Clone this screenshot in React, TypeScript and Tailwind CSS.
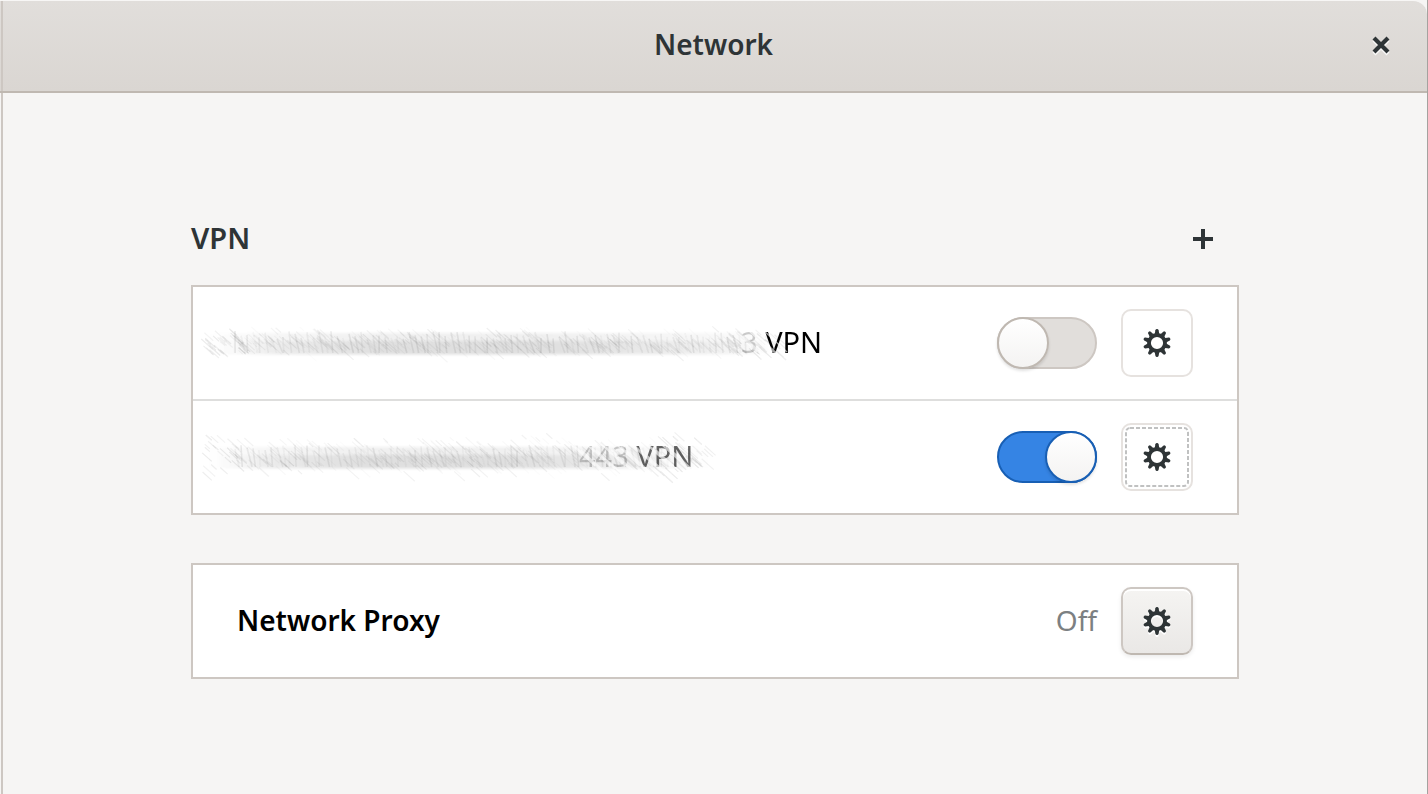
import React, { useState } from "react";

const TEETH = [0, 36, 72, 108, 144, 180, 216, 252, 288, 324];

function GearIcon({ raised = false }: { raised?: boolean }) {
  const shape = (
    <>
      <circle cx="16" cy="16" r="8" fill="none" stroke="currentColor" strokeWidth="3.8" />
      {TEETH.map((angle) => (
        <path
          key={angle}
          d="M13.5 8 L14.4 3.2 Q14.7 2 16 2 Q17.3 2 17.6 3.2 L18.5 8 Z"
          fill="currentColor"
          transform={`rotate(${angle} 16 16)`}
        />
      ))}
    </>
  );
  return (
    <svg viewBox="0 0 32 32" className="size-8" aria-hidden="true">
      {raised && (
        <g className="text-white" transform="translate(0 2)">
          {shape}
        </g>
      )}
      {shape}
    </svg>
  );
}

type GearButtonProps = { label: string; variant?: "flat" | "raised"; focused?: boolean };

function GearButton({ label, variant = "flat", focused = false }: GearButtonProps) {
  const look =
    variant === "raised"
      ? "border-[#cdc7c2] border-b-[#bfb8b1] bg-linear-to-b from-[#f5f4f2] to-[#eae8e6] shadow-[inset_0_2px_0_#ffffff,0_2px_4px_rgba(0,0,0,0.08)]"
      : "border-[#e6e2df] bg-white";
  return (
    <button
      type="button"
      aria-label={label}
      className={`relative flex h-[68px] w-[72px] shrink-0 items-center justify-center rounded-[10px] border-2 text-[#2e3436] ${look}`}
    >
      <GearIcon raised={variant === "raised"} />
      {focused && (
        <svg className="absolute inset-0 size-full" viewBox="0 0 68 64" aria-hidden="true">
          <rect x="3" y="3" width="62" height="58" rx="4" fill="none" stroke="#c0c1c1" strokeWidth="2" strokeDasharray="4 2" />
        </svg>
      )}
    </button>
  );
}

function Switch({ label, initial }: { label: string; initial: boolean }) {
  const [on, setOn] = useState(initial);
  return (
    <input
      type="checkbox"
      role="switch"
      aria-label={label}
      checked={on}
      onChange={(e) => setOn(e.target.checked)}
      className="relative h-[52px] w-[100px] shrink-0 appearance-none rounded-full border-2 border-[#cdc7c2] bg-[#e1dedb] before:absolute before:-left-0.5 before:-top-0.5 before:size-[52px] before:rounded-full before:border-2 before:border-[#bfb8b1] before:bg-linear-to-b before:from-white before:to-[#f4f3f2] before:shadow-[0_2px_3px_rgba(0,0,0,0.12)] before:content-[''] checked:border-[#185fb4] checked:bg-[#3584e4] checked:before:left-[46px] checked:before:border-[#185fb4]"
    />
  );
}

function noise(seed: number) {
  let s = seed;
  return () => {
    s = (s * 16807) % 2147483647;
    return s / 2147483647;
  };
}

type SmudgeProps = { id: string; width: number; seed: number; spread: number };

function Smudge({ id, width, seed, spread }: SmudgeProps) {
  const rand = noise(seed);
  const hatch = Array.from({ length: Math.round(width * 0.7) }, () => {
    const x = 8 + rand() * (width - 28);
    const y = 36 + (rand() + rand() - 1) * spread;
    const len = 4 + rand() * 9;
    const edge = x < 50 || x > width - 70 ? 0.03 : 0;
    return { x, y, len, opacity: 0.01 + edge + rand() * 0.05 };
  });
  const ghosts = Array.from({ length: Math.round((width - 90) / 6) }, (_, i) => ({
    x: 42 + i * 6,
    top: 28 + rand() * 8,
    lean: rand() * 6,
    opacity: 0.03 + rand() * 0.1,
  }));
  return (
    <svg width={width} height="80" viewBox={`0 0 ${width} 80`} className="absolute left-0 top-1/2 -translate-y-1/2" aria-hidden="true">
      <defs>
        <linearGradient id={`${id}-fade`}>
          <stop offset="0" stopColor="#000" stopOpacity="0" />
          <stop offset="0.12" stopColor="#000" stopOpacity="0.06" />
          <stop offset="0.3" stopColor="#000" stopOpacity="0.1" />
          <stop offset="0.6" stopColor="#000" stopOpacity="0.1" />
          <stop offset="0.88" stopColor="#000" stopOpacity="0.05" />
          <stop offset="1" stopColor="#000" stopOpacity="0" />
        </linearGradient>
        <filter id={`${id}-soft`} x="-5%" y="-60%" width="110%" height="220%">
          <feGaussianBlur stdDeviation="3 1.5" />
        </filter>
        <filter id={`${id}-fine`}>
          <feGaussianBlur stdDeviation="0.7" />
        </filter>
      </defs>
      <rect x="10" y="30" width={width - 20} height="22" fill={`url(#${id}-fade)`} opacity="0.6" filter={`url(#${id}-soft)`} />
      <rect x="20" y="38" width={width - 44} height="13" fill={`url(#${id}-fade)`} opacity="0.7" filter={`url(#${id}-soft)`} />
      <g stroke="#555" strokeWidth="1.6" filter={`url(#${id}-fine)`}>
        {ghosts.map((g, i) => (
          <path key={i} d={`M${g.x} ${g.top} L${g.x + g.lean} 50`} opacity={g.opacity} />
        ))}
      </g>
      <g stroke="#333" strokeWidth="1.2" filter={`url(#${id}-fine)`}>
        {hatch.map((h, i) => (
          <path key={i} d={`M${h.x} ${h.y} l${h.len} ${h.len * 0.9}`} opacity={h.opacity} />
        ))}
      </g>
    </svg>
  );
}

function Scratches({ marks, strength }: { marks: number; strength: number }) {
  return (
    <svg width={marks * 5 + 24} height="36" className="absolute -left-2 top-1" aria-hidden="true">
      {Array.from({ length: marks }, (_, i) => (
        <path key={i} d={`M${i * 5} ${4 + (i % 3) * 3} l24 22`} stroke="#fff" strokeWidth="1.4" opacity={strength} />
      ))}
    </svg>
  );
}

export default function App() {
  return (
    <div className="flex min-h-screen flex-col border-r border-[#a5a29f] bg-[#f6f5f4] font-['Noto_Sans','Open_Sans',sans-serif] text-[29px] leading-10 text-[#2e3436]">
      <header className="relative grid grid-cols-[1fr_auto_1fr] items-center rounded-tr-[14px] border-b-2 border-t border-b-[#bfb8b1] border-t-[#f7f6f5] bg-linear-to-b from-[#e1dedb] to-[#dad6d2] pb-0.5">
        <h1 className="col-start-2 pb-6 pt-[22px] text-[28px] font-semibold leading-[42px]">Network</h1>
        <button type="button" aria-label="Close" className="mr-[30px] flex size-8 items-center justify-center justify-self-end">
          <svg viewBox="0 0 32 32" className="size-8" fill="none" strokeWidth="4.2" aria-hidden="true">
            <path d="M9 11 L23 25 M23 11 L9 25" stroke="#fff" opacity="0.8" />
            <path d="M9 9 L23 23 M23 9 L9 23" stroke="#2e3436" />
          </svg>
        </button>
        <span className="absolute left-px top-0 h-full w-0.5 bg-[#cdc7c2]" />
      </header>

      <main className="ml-px flex-1 border-l-2 border-[#cdc7c2] pt-28">
        <div className="mx-auto w-full max-w-[1048px]">
          <div className="mb-3 flex items-center justify-between">
            <h2 className="pb-0.5 font-semibold">VPN</h2>
            <button type="button" aria-label="Add VPN" className="flex h-[68px] w-[72px] items-center justify-center">
              <svg viewBox="0 0 20 20" className="size-5" aria-hidden="true">
                <path d="M8 0h4v8h8v4h-8v8H8v-8H0V8h8z" fill="#2e3436" />
              </svg>
            </button>
          </div>

          <ul className="divide-y-2 divide-[#dededd] border-2 border-[#cdc7c2] bg-white text-black">
            <li className="flex items-center gap-6 py-[22px] pr-11">
              <div className="relative flex flex-1 items-center pb-0.5 pl-[548px]">
                <Smudge id="first" width={604} seed={4211} spread={14} />
                <span className="relative whitespace-nowrap">
                  <span className="opacity-20">3 </span>VPN
                  <Scratches marks={7} strength={0.6} />
                </span>
              </div>
              <Switch label="First VPN connection" initial={false} />
              <GearButton label="First VPN options" />
            </li>
            <li className="flex items-center gap-6 py-[22px] pr-11">
              <div className="relative flex flex-1 items-center pb-0.5 pl-[386px]">
                <Smudge id="second" width={532} seed={977} spread={22} />
                <span className="relative whitespace-nowrap">
                  <span className="opacity-20">443 </span>
                  <span className="opacity-60">VPN</span>
                  <Scratches marks={21} strength={0.6} />
                </span>
              </div>
              <Switch label="Second VPN connection" initial={true} />
              <GearButton label="Second VPN options" focused />
            </li>
          </ul>

          <section className="mt-12 flex items-center gap-6 border-2 border-[#cdc7c2] bg-white px-11 py-[22px]">
            <h2 className="flex-1 pb-0.5 text-[28px] font-semibold text-black">Network Proxy</h2>
            <span className="pb-0.5 text-[28px] text-[#7c8082]">Off</span>
            <GearButton label="Network Proxy options" variant="raised" />
          </section>
        </div>
      </main>
    </div>
  );
}
